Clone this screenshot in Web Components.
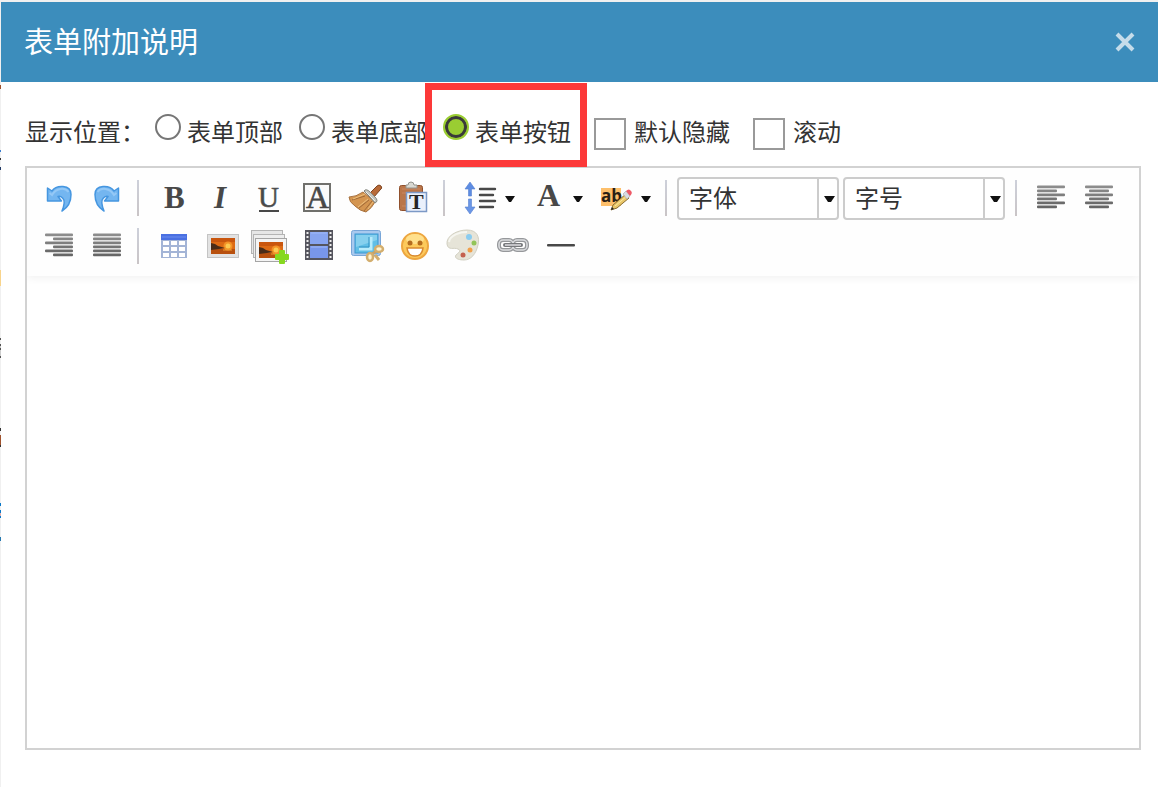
<!DOCTYPE html>
<html lang="zh-CN">
<head>
<meta charset="utf-8">
<meta name="viewport" content="width=device-width, initial-scale=1">
<title>表单附加说明</title>
<style>
  body {
    margin: 0;
    font-family: "Noto Sans CJK SC", sans-serif;
    font-size: 24px;
    color: #333;
    background: #f0f0f0;
  }
</style>
</head>
<body>
<form-dialog>
  <span slot="title">表单附加说明</span>
  <option-row slot="options">
    <span slot="label">显示位置：</span>
    <choice-item type="radio" name="position">表单顶部</choice-item>
    <choice-item type="radio" name="position">表单底部</choice-item>
    <choice-item type="radio" name="position" checked marked>表单按钮</choice-item>
    <choice-item type="checkbox" name="hidden">默认隐藏</choice-item>
    <choice-item type="checkbox" name="scroll">滚动</choice-item>
  </option-row>
  <rich-editor>
    <tool-button icon="undo" title="撤销"></tool-button>
    <tool-button icon="redo" title="重做"></tool-button>
    <tool-divider></tool-divider>
    <tool-button icon="bold" title="加粗"></tool-button>
    <tool-button icon="italic" title="斜体"></tool-button>
    <tool-button icon="underline" title="下划线"></tool-button>
    <tool-button icon="border" title="字符边框"></tool-button>
    <tool-button icon="brush" title="格式刷"></tool-button>
    <tool-button icon="paste" title="纯文本粘贴"></tool-button>
    <tool-divider></tool-divider>
    <tool-button icon="lineheight" title="行间距" menu></tool-button>
    <tool-button icon="color" title="字体颜色" menu></tool-button>
    <tool-button icon="highlight" title="背景色" menu></tool-button>
    <tool-divider></tool-divider>
    <tool-select>字体</tool-select>
    <tool-select>字号</tool-select>
    <tool-divider></tool-divider>
    <tool-button icon="left" title="居左对齐"></tool-button>
    <tool-button icon="center" title="居中对齐"></tool-button>
    <tool-button icon="right" title="居右对齐"></tool-button>
    <tool-button icon="justify" title="两端对齐"></tool-button>
    <tool-divider></tool-divider>
    <tool-button icon="table" title="插入表格"></tool-button>
    <tool-button icon="image" title="图片"></tool-button>
    <tool-button icon="images" title="多图上传"></tool-button>
    <tool-button icon="video" title="视频"></tool-button>
    <tool-button icon="snap" title="截图"></tool-button>
    <tool-button icon="smile" title="表情"></tool-button>
    <tool-button icon="palette" title="涂鸦"></tool-button>
    <tool-button icon="link" title="超链接"></tool-button>
    <tool-button icon="rule" title="分隔线"></tool-button>
  </rich-editor>
</form-dialog>

<script>
// six bars, each given as [x, width]
const bars = (rows) => rows.map(([x, w], i) =>
  `<rect x="${x}" y="${11.6 + i * 4}" width="${w}" height="2.600" rx="1" fill="${['#8c8c8c', '#858585', '#7e7e7e', '#747474', '#6b6b6b', '#666'][i]}"/>`
).join('');

const arrow = `
  <path d="M12.500 14L17 17C21 11 36 10 36 20.500C36 28 32 34 27 37C29 32 30.500 27 28 24.500C26.500 22.500 24.500 22 23 22.500L26.500 27H12.500Z"
    fill="#74b6f0" stroke="#4596e0" stroke-width="1.500" stroke-linejoin="round"/>
  <path d="M14.500 19L17 21C21 14 30 13 33.500 18" fill="none" stroke="#94c8f6" stroke-width="2"/>`;

const sunset = (x, y, w, h) => `
  <svg x="${x}" y="${y}" width="${w}" height="${h}" viewBox="0 0 24 16" preserveAspectRatio="none">
    <rect width="24" height="16" fill="#dd6a14"/>
    <rect width="24" height="4" fill="#c9560e"/>
    <rect y="11" width="24" height="5" fill="#b8500e"/>
    <circle cx="17" cy="8" r="4.500" fill="#f39327"/>
    <circle cx="17" cy="8" r="2.500" fill="#fcca52"/>
    <path d="M0 5L4 6L7 8L14 10L8 11L0 12Z" fill="#4a2c18"/>
    <path d="M12 12H21" stroke="#eb9a30"/>
  </svg>`;

const ICONS = {
  undo: arrow,
  redo: `<g transform="matrix(-1 0 0 1 48 0)">${arrow}</g>`,
  bold: `<text x="15" y="34" font-size="31" font-weight="bold">B</text>`,
  italic: `<text x="17" y="34" font-size="31" font-weight="bold" font-style="italic">I</text>`,
  underline: `<text x="13" y="33" font-size="29" stroke="#555" stroke-width=".6">U</text><rect x="14" y="36" width="20" height="2"/>`,
  border: `<rect x="11" y="10" width="26" height="27" fill="#fafafa" stroke="#70706c" stroke-width="2"/><text x="13" y="34" font-size="32" stroke="#444" stroke-width=".6">A</text>`,
  brush: `
    <path d="M29 19L36 12Q38 10 40 12Q42 14 39 16L33 23Z" fill="#b86a38" stroke="#7d4422"/>
    <path d="M22 18Q15 23 8 23Q8 28 14 32Q19 37 25 38Q31 34 34 28Z" fill="#d49550" stroke="#a87240"/>
    <path d="M11 26L24 22M18 34L28 26M23 37L31 27" stroke="#a06a38" fill="none"/>
    <path d="M12 25L24 20M17 33L27 25M27 35L32 28" stroke="#ecc07e" fill="none"/>
    <path d="M23 17Q25 14 29 18L34 23Q38 27 34 29L28 22Z" fill="#c4c5be" stroke="#84857d"/>
    <path d="M25 18L34 27" stroke="#f0f0ea"/>`,
  paste: `
    <rect x="10.500" y="11.500" width="23" height="25" rx="2" fill="#ba764a" stroke="#90502c"/>
    <path d="M13 15H31M13 19H17M13 32H17" stroke="#c98862"/>
    <path d="M17 14V11H19Q19 8 22 8Q25 8 25 11H28V14Z" fill="#d9d9d3" stroke="#92928c"/>
    <rect x="17.500" y="18.500" width="20" height="19" fill="#eaf0fb" stroke="#7c99c6" stroke-width="1.500"/>
    <text x="20" y="35" font-size="22" font-weight="bold" fill="#252525">T</text>`,
  lineheight: `
    <path d="M15 8L20 15H16.500V22H13.500V15H10Z" fill="#5d8ce2" stroke="#5580d0" stroke-width=".6"/>
    <path d="M15 40L10 33H13.500V25H16.500V33H20Z" fill="#6a96e6" stroke="#5580d0" stroke-width=".6"/>
    <path d="M25 15H40M25 21H38M25 27H40M25 33H38" stroke="#484848" stroke-width="2.400" stroke-linecap="round"/>`,
  color: `<text x="14" y="32" font-size="32" font-weight="bold">A</text>`,
  highlight: `
    <rect x="10" y="14" width="20" height="18" fill="#fdbf6b"/>
    <text x="10" y="28" font-size="17" font-weight="bold" fill="#292015" font-family="Open Sans, sans-serif">ab</text>
    <path d="M20 36L22 31L35 20L38 24L26 34Z" fill="#e9c668" stroke="#8b6d32"/>
    <path d="M24 32L36 22" stroke="#fbeaa0"/>
    <path d="M32 20L35 17L39 22L36 25Z" fill="#d8dce2" stroke="#a3a6ac" stroke-width=".6"/>
    <path d="M35 17Q38 14 40 17Q42 19 39 22Z" fill="#ee5967"/>
    <path d="M20 36L21 33L23 35Z" fill="#222"/>`,
  left: bars([[10, 28], [10, 20], [10, 28], [10, 20], [10, 28], [10, 20]]),
  center: bars([[10, 28], [14, 20], [10, 28], [14, 20], [10, 28], [14, 20]]),
  right: bars([[10, 28], [18, 20], [10, 28], [18, 20], [10, 28], [18, 20]]),
  justify: bars([[10, 28], [10, 28], [10, 28], [10, 28], [10, 28], [10, 28]]),
  table: `
    <rect x="12" y="12" width="26" height="24" fill="#a3b4d6"/>
    <rect x="12" y="12" width="26" height="6" fill="#4a70e2"/>
    <path d="M13 15H37" stroke="#6a8cf0"/>
    <path d="M14 19h6v4h-6zM22 19h6v4h-6zM30 19h6v4h-6zM14 25h6v4h-6zM22 25h6v4h-6zM30 25h6v4h-6zM14 31h6v4h-6zM22 31h6v4h-6zM30 31h6v4h-6z" fill="#fff"/>`,
  image: `<rect x="10.500" y="12.500" width="31" height="23" fill="#e2e2e2" stroke="#c4c4c4"/>${sunset(14, 16, 24, 16)}`,
  images: `
    <rect x="6.500" y="8.500" width="31" height="23" fill="#e6e6e6" stroke="#b4b4b4"/>
    <rect x="8.500" y="12.500" width="31" height="23" fill="#ededed" stroke="#b4b4b4"/>
    <rect x="10.500" y="16.500" width="31" height="23" fill="#f4f4f4" stroke="#a5a5a5"/>
    ${sunset(14, 20, 24, 16)}
    <path d="M35 29H39V33H43V37H39V41H35V37H31V33H35Z" fill="#86d820" stroke="#86d820" stroke-linejoin="round" stroke-width="2"/>`,
  video: `
    <rect x="12" y="8" width="28" height="30" fill="#55555e"/>
    <rect x="17" y="10" width="18" height="12" fill="#87a4f0"/>
    <rect x="17" y="24" width="18" height="12" fill="#7896ea"/>
    <path d="M14.500 10V37M37.500 10V37" stroke="#eee" stroke-width="2" stroke-dasharray="2 2"/>
    <path d="M18 11H34M18 25H34" stroke="#9fb8f8"/>`,
  snap: `
    <rect x="10.500" y="8.500" width="29" height="25" rx="2" fill="#a9c9ee" stroke="#78a6d8"/>
    <rect x="14" y="12" width="23" height="19" fill="#61bfe6" stroke="#3d96cf"/>
    <path d="M15 13H36V18L15 25Z" fill="#86d0ee"/>
    <path d="M30 15V27H18" fill="none" stroke="#b8ecfb" stroke-width="3"/>
    <path d="M28 15V25H18" fill="none" stroke="#2f90c2"/>
    <path d="M31 32L37 28" fill="none" stroke="#c7a368" stroke-width="3"/>
    <ellipse cx="38" cy="27" rx="4" ry="3" fill="#fff3cf" stroke="#d3ae6e" stroke-width="2.500"/>
    <ellipse cx="29" cy="35" rx="3" ry="4" fill="#fff3cf" stroke="#d3ae6e" stroke-width="2.500"/>
    <path d="M34 33L38 38" stroke="#d3ae6e" stroke-width="3"/>`,
  smile: `
    <circle cx="26" cy="24" r="13" fill="#fcc95b" stroke="#eda640" stroke-width="2"/>
    <ellipse cx="26" cy="17" rx="9" ry="5" fill="#ffe08c"/>
    <circle cx="21" cy="21" r="2.500" fill="#b56c1e"/><circle cx="31" cy="21" r="2.500" fill="#b56c1e"/>
    <path d="M18 26H34Q33 34 26 34Q19 34 18 26Z" fill="#fff" stroke="#d98a30" stroke-width="1.500"/>`,
  palette: `
    <path d="M10 22C9 14 20 8 30 8C40 8 43 15 41 23C39 32 34 38 27 38C21 38 17 36 19 33C21 31 25 29 21 27C17 25 11 29 10 22Z" fill="#e6e4d8" stroke="#d2d0c2"/>
    <path d="M12 20C13 13 23 10 30 10" stroke="#f6f6f0" stroke-width="2" fill="none"/>
    <circle cx="32" cy="15" r="3" fill="#8accf0"/><circle cx="37" cy="21" r="2.500" fill="#92c458"/>
    <circle cx="33" cy="28" r="2.500" fill="#f1a04a"/><circle cx="26" cy="33" r="2.500" fill="#c4604e"/>`,
  link: `
    <g fill="none" stroke="#96989b" stroke-width="4"><rect x="14" y="18" width="14" height="10" rx="4"/><rect x="28" y="18" width="14" height="10" rx="4"/></g>
    <g fill="none" stroke="#dcdde0" stroke-width="1.500"><rect x="14" y="18" width="14" height="10" rx="4"/><rect x="28" y="18" width="14" height="10" rx="4"/></g>
    <path d="M20 23H36" stroke="#77797c" stroke-width="4" stroke-linecap="round"/>
    <path d="M20 23H36" stroke="#dcdde0" stroke-width="1.500"/>`,
  rule: `<rect x="14" y="22" width="28" height="2.400" rx="1"/>`
};

class FormDialog extends HTMLElement {
  constructor() {
    super();
    this.attachShadow({ mode: 'open' });
    this.shadowRoot.innerHTML = `
      <style>
        :host {
          display: flex;
          box-sizing: border-box;
          min-height: 100vh;
          padding: 2px 0 0 1px;
          /* edge of the page that lies under the dialog */
          background: linear-gradient(
            #f0f0f0 85px, #a0522d 85px, #a0522d 89px, #f0f0f0 89px, #f0f0f0 150px,
            #3c7fd0 150px, #3c7fd0 152px, #f0f0f0 152px, #f0f0f0 158px, #333 158px,
            #333 160px, #f0f0f0 160px, #f0f0f0 167px, #223a66 167px, #223a66 170px,
            #f0f0f0 170px, #f0f0f0 270px, #f8d48c 270px, #f8d48c 286px, #f0f0f0 286px,
            #f0f0f0 338px, #555 338px, #555 340px, #f0f0f0 340px, #f0f0f0 344px,
            #555 344px, #555 346px, #ccc 346px, #ccc 348px, #555 348px, #555 350px,
            #ccc 350px, #ccc 356px, #555 356px, #555 358px, #f0f0f0 358px, #f0f0f0 428px,
            #333 428px, #333 431px, #f0f0f0 431px, #f0f0f0 435px, #a0522d 435px,
            #a0522d 445px, #333 445px, #333 447px, #f0f0f0 447px, #f0f0f0 503px,
            #0a78c8 503px, #0a78c8 506px, #f0f0f0 506px, #f0f0f0 510px, #0a78c8 510px,
            #0a78c8 513px, #e0b0b0 513px, #e0b0b0 516px, #0a78c8 516px, #0a78c8 518px,
            #f0f0f0 518px, #f0f0f0 537px, #2478b0 537px, #2478b0 541px, #f0f0f0 541px);
        }
        section {
          flex: 1;
          min-width: 0;
          display: flex;
          flex-direction: column;
          background: #fff;
        }
        header {
          display: flex;
          align-items: center;
          justify-content: space-between;
          height: 80px;
          padding: 0 15px 0 23px;
          background: #3c8dbc;
          color: #fff;
        }
        h1 {
          margin: 0;
          padding-bottom: 4px;
          font-size: 29px;
          line-height: 40px;
          font-weight: 400;
        }
        button {
          display: flex;
          padding: 8px;
          border: 0;
          background: none;
          cursor: pointer;
        }
        svg {
          width: 20px;
          height: 20px;
        }
        main {
          flex: 1;
          display: flex;
          flex-direction: column;
          padding: 0 17px 37px 24px;
        }
      </style>
      <section role="dialog" aria-labelledby="title">
        <header>
          <h1 id="title"><slot name="title"></slot></h1>
          <button type="button" aria-label="关闭">
            <svg viewBox="0 0 20 20"><path d="M2 2L18 18M18 2L2 18" stroke="#c5dcea" stroke-width="4"/></svg>
          </button>
        </header>
        <main>
          <slot name="options"></slot>
          <slot></slot>
        </main>
      </section>
    `;
    this.shadowRoot.querySelector('button').addEventListener('click', () => {
      this.dispatchEvent(new CustomEvent('close'));
    });
  }
}

class OptionRow extends HTMLElement {
  constructor() {
    super();
    this.attachShadow({ mode: 'open' });
    this.shadowRoot.innerHTML = `
      <style>
        :host {
          display: flex;
          align-items: center;
          box-sizing: border-box;
          min-height: 84px;
          padding-top: 16px;
          line-height: 36px;
        }
        ::slotted(span) {
          margin-right: 10px;
          padding-bottom: 2px;
        }
      </style>
      <slot name="label"></slot>
      <slot></slot>
    `;
  }
}

class ChoiceItem extends HTMLElement {
  constructor() {
    super();
    this.attachShadow({ mode: 'open' });
    this.shadowRoot.innerHTML = `
      <style>
        :host {
          display: block;
          position: relative;
          margin-right: 16px;
          white-space: nowrap;
        }
        :host([type="checkbox"]) {
          margin: 0 16px 0 7px;
        }
        label {
          display: flex;
          align-items: center;
          gap: 6px;
        }
        span {
          padding-bottom: 2px;
        }
        input {
          appearance: none;
          box-sizing: border-box;
          margin: 0;
          background: #fff;
        }
        input[type="radio"] {
          width: 26px;
          height: 26px;
          margin-bottom: 10px;
          border: 2px solid #767676;
          border-radius: 50%;
        }
        input[type="radio"]:checked {
          border-color: #9acd32;
          background: #9acd32;
          box-shadow: inset 0 0 0 3px #3a3a3a;
        }
        input[type="checkbox"] {
          width: 32px;
          height: 32px;
          margin: 4px 2px 0 0;
          border: 2px solid #999;
        }
        input[type="checkbox"]:checked {
          background: #3c8dbc;
        }
        :host([marked])::after {
          content: "";
          position: absolute;
          inset: -30px -16px -16px -18px;
          border: 7px solid #fc3939;
          pointer-events: none;
          z-index: 1;
        }
      </style>
      <label><input><span><slot></slot></span></label>
    `;
  }

  connectedCallback() {
    const input = this.shadowRoot.querySelector('input');
    input.type = this.getAttribute('type');
    input.name = this.getAttribute('name');
    input.checked = this.hasAttribute('checked');
    input.addEventListener('change', () => this._clearOthers(input));
  }

  // radios in separate shadow roots do not form a group by themselves
  _clearOthers(input) {
    if (input.type !== 'radio') return;
    this.parentElement.querySelectorAll('choice-item[type="radio"]').forEach((item) => {
      if (item !== this) item.shadowRoot.querySelector('input').checked = false;
    });
  }
}

class ToolButton extends HTMLElement {
  constructor() {
    super();
    this.attachShadow({ mode: 'open' });
  }

  connectedCallback() {
    const menu = this.hasAttribute('menu');
    const width = menu ? 68 : 48;
    this.shadowRoot.innerHTML = `
      <style>
        :host {
          display: block;
        }
        button {
          display: block;
          padding: 0;
          border: 0;
          background: none;
          cursor: pointer;
        }
        button:hover {
          background: #eef5fc;
        }
        svg {
          display: block;
          fill: #484848;
          font-family: "Liberation Serif", serif;
        }
      </style>
      <button type="button" aria-label="${this.title}">
        <svg width="${width}" height="48" viewBox="0 0 ${width} 48">
          ${ICONS[this.getAttribute('icon')]}
          ${menu ? '<path d="M50 22H60L56 28H54Z" fill="#111"/>' : ''}
        </svg>
      </button>
    `;
  }
}

class ToolDivider extends HTMLElement {
  constructor() {
    super();
    this.attachShadow({ mode: 'open' });
    this.shadowRoot.innerHTML = `
      <style>
        :host {
          display: block;
          width: 2px;
          height: 36px;
          margin: 0 10px 0 6px;
          background: linear-gradient(#cdd0da, #c9c4c6);
        }
      </style>
    `;
  }
}

class ToolSelect extends HTMLElement {
  constructor() {
    super();
    this.attachShadow({ mode: 'open' });
    this.shadowRoot.innerHTML = `
      <style>
        :host {
          display: grid;
          grid-template-columns: 1fr 22px;
          width: 162px;
          height: 43px;
          margin-right: 4px;
        }
        select {
          grid-area: 1 / 1 / 2 / 3;
          appearance: none;
          padding: 0 30px 4px 10px;
          border: 2px solid #ccc;
          border-radius: 4px;
          background: #fff;
          color: #333;
          font: inherit;
        }
        svg {
          grid-area: 1 / 2;
          width: 22px;
          height: 43px;
          pointer-events: none;
        }
      </style>
      <select></select>
      <svg viewBox="0 0 22 43"><path d="M1 1V42" stroke="#ccc" stroke-width="2"/><path d="M7 19H18L14 25H11Z" fill="#111"/></svg>
    `;
  }

  connectedCallback() {
    const select = this.shadowRoot.querySelector('select');
    select.add(new Option(this.textContent));
    select.setAttribute('aria-label', this.textContent);
  }
}

class RichEditor extends HTMLElement {
  constructor() {
    super();
    this.attachShadow({ mode: 'open' });
    this.shadowRoot.innerHTML = `
      <style>
        :host {
          flex: 1;
          display: flex;
          flex-direction: column;
          border: 2px solid #d2d2d2;
        }
        #toolbar {
          display: flex;
          flex-wrap: wrap;
          align-items: center;
          padding: 6px 8px;
          background: #fefefe;
          box-shadow: 0 2px 8px rgba(0, 0, 0, 0.06);
          clip-path: inset(0 0 -10px 0);
        }
        textarea {
          flex: 1;
          min-height: 200px;
          padding: 16px;
          border: 0;
          outline: 0;
          resize: none;
          font: inherit;
          background: transparent;
        }
      </style>
      <div id="toolbar" role="toolbar"><slot></slot></div>
      <textarea aria-label="说明内容"></textarea>
    `;
  }
}

customElements.define('form-dialog', FormDialog);
customElements.define('option-row', OptionRow);
customElements.define('choice-item', ChoiceItem);
customElements.define('tool-button', ToolButton);
customElements.define('tool-divider', ToolDivider);
customElements.define('tool-select', ToolSelect);
customElements.define('rich-editor', RichEditor);
</script>
</body>
</html>
